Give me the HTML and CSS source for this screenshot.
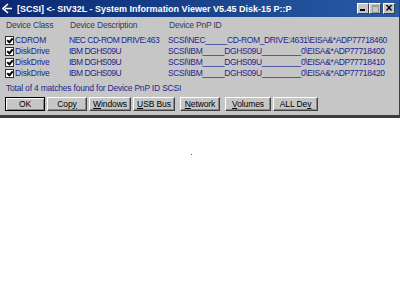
FILE: index.html
```html
<!DOCTYPE html>
<html lang="en">
<head>
    <meta charset="UTF-8">
    <title>SIV32L</title>
    <link rel="stylesheet" href="styles.css">
</head>
<body>
    <div class="window">
        <div class="title-bar">
            <span class="app-icon">
                <svg width="11" height="11" viewBox="0 0 11 11"><path d="M6 1 L1 5.5 L6 10 M3 5.5 H10" fill="none" stroke="#fff" stroke-width="1.6"/></svg>
            </span>
            <span class="title-text">[SCSI] &lt;- SIV32L - System Information Viewer V5.45 Disk-15 P::P</span>
            <span class="title-btns">
                <span class="tb-btn tb-min"></span><span class="tb-btn tb-max"></span><span class="tb-btn tb-close">&#215;</span>
            </span>
        </div>

        <div class="content">
            <div class="grid head">
                <span>Device Class</span>
                <span>Device Description</span>
                <span>Device PnP ID</span>
            </div>
            <div class="rows">
                <div class="grid row">
                    <span class="cls"><i class="chk"></i>CDROM</span>
                    <span class="desc">NEC CD-ROM DRIVE:463</span>
                    <span class="pnp">SCSI\NEC_____CD-ROM_DRIVE:4631\EISA&amp;*ADP77718460</span>
                </div>
                <div class="grid row">
                    <span class="cls"><i class="chk"></i>DiskDrive</span>
                    <span class="desc">IBM DGHS09U</span>
                    <span class="pnp">SCSI\IBM_____DGHS09U_________0\EISA&amp;*ADP77718400</span>
                </div>
                <div class="grid row">
                    <span class="cls"><i class="chk"></i>DiskDrive</span>
                    <span class="desc">IBM DGHS09U</span>
                    <span class="pnp">SCSI\IBM_____DGHS09U_________0\EISA&amp;*ADP77718410</span>
                </div>
                <div class="grid row">
                    <span class="cls"><i class="chk"></i>DiskDrive</span>
                    <span class="desc">IBM DGHS09U</span>
                    <span class="pnp">SCSI\IBM_____DGHS09U_________0\EISA&amp;*ADP77718420</span>
                </div>
            </div>

            <p class="total">Total of 4 matches found for Device PnP ID SCSI</p>

            <div class="buttons">
                <button class="btn btn-default w40">OK</button>
                <button class="btn w40">Cop<u>y</u></button>
                <button class="btn w42"><u>W</u>indows</button>
                <button class="btn w42"><u>U</u>SB Bus</button>
                <button class="btn w40 gap"><u>N</u>etwork</button>
                <button class="btn w46 gap"><u>V</u>olumes</button>
                <button class="btn w45">ALL De<u>v</u></button>
            </div>
        </div>
    </div>

    <div class="page">
        <span class="dot"></span>
    </div>
</body>
</html>
```

FILE: styles.css
```css
body {
    margin: 0;
    background: #fff;
    font-family: "Liberation Sans", Arial, sans-serif;
    font-size: 8.5px;
    letter-spacing: -0.2px;
    overflow: hidden;
}

/* Window frame */
.window {
    width: 400px;
    box-sizing: border-box;
    background: #c6c6c6;
    border-right: 1px solid #404040;
    border-bottom: 3px solid #3c3c3c;
}

.title-bar {
    height: 17px;
    display: flex;
    align-items: center;
    background: linear-gradient(to right, #0c2874, #1c4890 60%, #2a5aa6);
    color: #fff;
    padding: 0 4px 0 2px;
}

.app-icon {
    width: 12px;
    height: 11px;
    display: flex;
    margin-right: 3px;
}

.title-text {
    font-weight: bold;
    font-size: 9px;
    letter-spacing: 0;
    white-space: nowrap;
    flex: 1;
}

.title-btns {
    display: flex;
}

.tb-btn {
    width: 12px;
    height: 11px;
    box-sizing: border-box;
    background: #c6c6c6;
    border: 1px solid;
    border-color: #fff #404040 #404040 #fff;
    color: #000;
    text-align: center;
    position: relative;
}

.tb-min::after {
    content: "";
    position: absolute;
    left: 2px;
    bottom: 2px;
    width: 5px;
    height: 2px;
    background: #000;
}

.tb-max {
    margin-right: 2px;
}

.tb-max::after {
    content: "";
    position: absolute;
    left: 2px;
    top: 1px;
    width: 5px;
    height: 5px;
    border: 1px solid #999;
    border-top-width: 2px;
}

.tb-close {
    font-size: 12px;
    font-weight: bold;
    line-height: 8px;
}

/* Content */
.content {
    padding: 2px 0 0 5px;
}

.grid {
    display: grid;
    grid-template-columns: 64px 99px 1fr;
    white-space: nowrap;
}

.head {
    color: #2c3a64;
    height: 11px;
    line-height: 11px;
    padding: 1px 0 0 1px;
    margin-bottom: 4px;
}

.rows {
    color: #1c2690;
}

.row {
    height: 11px;
    line-height: 11px;
}

.desc {
    letter-spacing: -0.5px;
}

.pnp {
    letter-spacing: -0.37px;
}

.cls {
    display: flex;
    align-items: center;
}

.chk {
    width: 9px;
    height: 9px;
    box-sizing: border-box;
    border: 1px solid #303030;
    background: #fff;
    margin-right: 1px;
    position: relative;
}

.chk::after {
    content: "";
    position: absolute;
    left: 2px;
    top: 0;
    width: 2px;
    height: 4px;
    border: solid #000;
    border-width: 0 2px 2px 0;
    transform: rotate(40deg);
}

.total {
    margin: 4px 0 0 1px;
    color: #1c2690;
    height: 11px;
    line-height: 11px;
}

.buttons {
    display: flex;
    margin-top: 3px;
    padding-bottom: 4px;
}

.btn {
    font-family: inherit;
    font-size: 8.5px;
    letter-spacing: -0.1px;
    color: #000;
    background: #c6c6c6;
    height: 14px;
    padding: 0;
    margin-right: 2px;
    border: 1px solid;
    border-color: #fff #404040 #404040 #fff;
    box-shadow: inset -1px -1px 0 #888;
    line-height: 11px;
}

.btn-default {
    border: 1px solid #000;
    box-shadow: inset 1px 1px 0 #fff, inset -1px -1px 0 #888;
}

.w40 { width: 40px; }
.w42 { width: 42px; }
.w45 { width: 45px; }
.w46 { width: 46px; }

.gap {
    margin-left: 3px;
}

.page {
    position: relative;
    height: 172px;
}

.dot {
    position: absolute;
    left: 191px;
    top: 36px;
    width: 1px;
    height: 1px;
    background: #555;
}
```
